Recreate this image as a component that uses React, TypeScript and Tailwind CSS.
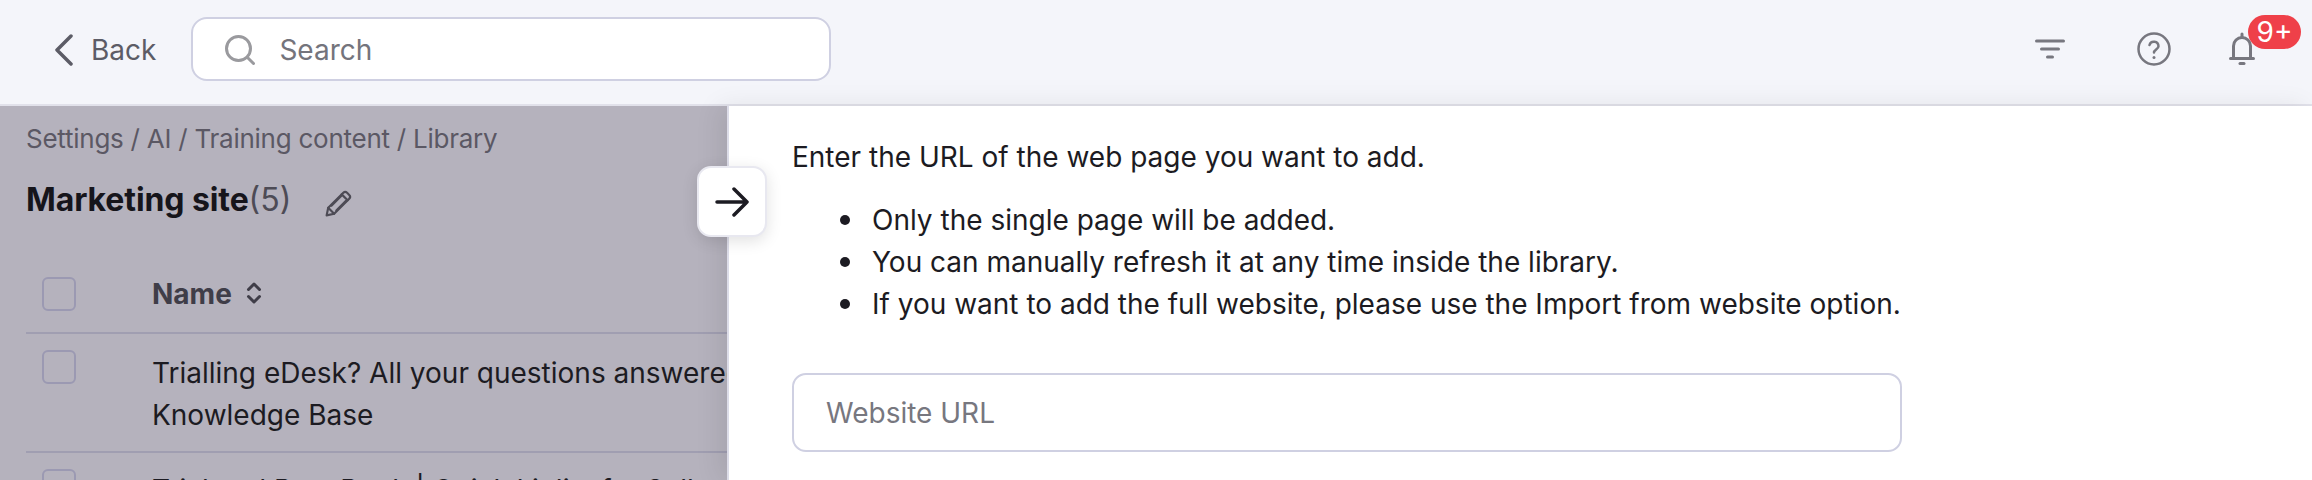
const bullets = [
    'Only the single page will be added.',
    'You can manually refresh it at any time inside the library.',
    'If you want to add the full website, please use the Import from website option.',
];

export default function App() {
    return (
        <div className="w-[2312px] h-[480px] overflow-hidden flex flex-col bg-white text-[28px] leading-[42px] text-[#1c1b22] font-['Inter',sans-serif]">
            {/* Top bar */}
            <header className="h-[106px] shrink-0 flex items-center pb-[7px] bg-[#f4f5fa] border-b-2 border-[#e1e1ea]">
                <button className="ml-[55px] mt-[3px] flex items-center gap-[18px] text-[#5c5c66]">
                    <svg className="w-[18px] h-[32px]" viewBox="0 0 18 32" fill="none" stroke="#5c5c66" strokeWidth="3.500" strokeLinecap="round" strokeLinejoin="round">
                        <path d="M16 2 2 16l14 14" />
                    </svg>
                    Back
                </button>
                <div className="ml-[35px] w-[640px] h-[64px] flex items-center rounded-[16px] border-2 border-[#cfd0e2] bg-white pl-[32px] pt-[3px] text-[#74747c]">
                    <svg className="w-[30px] h-[30px]" viewBox="0 0 30 30" fill="none" stroke="#9a9a9e" strokeWidth="3" strokeLinecap="round">
                        <circle cx="13.500" cy="13.500" r="12" />
                        <path d="m22.500 22.500 6 6" />
                    </svg>
                    <span className="ml-[24px]">Search</span>
                </div>
                <div className="ml-auto flex items-center mr-[57px]">
                    <svg className="w-[30px] h-[20px]" viewBox="0 0 30 20" fill="none" stroke="#77777f" strokeWidth="3" strokeLinecap="round">
                        <path d="M1.500 2h27M6.500 10h17M12.500 18h5" />
                    </svg>
                    <svg className="ml-[72px] w-[34px] h-[34px]" viewBox="0 0 34 34" fill="none" stroke="#77777f" strokeWidth="2.500" strokeLinecap="round" strokeLinejoin="round">
                        <circle cx="17" cy="17" r="15.500" />
                        <path d="M12.500 13a4.600 4.600 0 0 1 9 1.200c0 3-4.500 3.600-4.500 6.300" />
                        <path d="M17 25.500v.1" strokeWidth="3" />
                    </svg>
                    <div className="ml-[58px] relative w-[26px] h-[34px]">
                        <svg className="w-[26px] h-[34px]" viewBox="0 0 26 34" fill="none" stroke="#77777f" strokeWidth="3" strokeLinecap="round" strokeLinejoin="round">
                            <path d="M4.500 26V14a8.500 8.500 0 0 1 17 0v12" />
                            <path d="M1.500 26.500h23" />
                            <path d="M13 2v3" />
                            <path d="M11 31.500h4" />
                        </svg>
                        <span className="absolute left-[19px] top-[-17px] h-[34px] w-[53px] rounded-full bg-[#ef4049] text-white text-[28px] leading-[34px] text-center">9+</span>
                    </div>
                </div>
            </header>

            <div className="flex-1 flex min-h-0 relative">
                {/* Dimmed page behind the drawer */}
                <main className="w-[727px] shrink-0 overflow-hidden bg-[#b5b2bd] pl-[26px] pt-[12px]">
                    <div className="text-[26px] tracking-[-0.25px] text-[#5b5864] whitespace-nowrap">Settings / AI / Training content / Library</div>
                    <div className="mt-[19px] flex items-center h-[42px]">
                        <span className="text-[32px] font-bold tracking-[-0.1px] text-[#16151b]">Marketing site</span>
                        <span className="text-[32px] text-[#4d4b55]">(5)</span>
                        <svg className="ml-[34px] mt-[6px] w-[28px] h-[28px]" viewBox="0 0 26 26" fill="none" stroke="#4d4b55" strokeWidth="2" strokeLinejoin="round" strokeLinecap="round">
                            <path d="M1.500 24.500 3 17.500 17 3.500a2.500 2.500 0 0 1 3.500 0l2 2a2.500 2.500 0 0 1 0 3.500L8.500 23z" />
                            <path d="M6 15.500 15 6.500M10.500 20 19.500 11M3 17.500l5.500 5.500M15.500 5l5.500 5.500" />
                        </svg>
                    </div>
                    <div className="w-[900px] h-[113px] flex items-start border-b-2 border-[#a09eb1]">
                        <div className="ml-[16px] mt-[56px] w-[34px] h-[34px] rounded-[6px] border-2 border-[#9b99b2]" />
                        <div className="ml-[76px] mt-[52px] flex items-center font-bold text-[#3f3d48]">
                            Name
                            <svg className="ml-[14px] mt-[-2px] w-[16px] h-[22px]" viewBox="0 0 16 22" fill="none" stroke="#3f3d48" strokeWidth="3" strokeLinecap="round" strokeLinejoin="round">
                                <path d="M2.500 7.500 8 2l5.500 5.500M2.500 14.500 8 20l5.500-5.500" />
                            </svg>
                        </div>
                    </div>
                    <div className="w-[900px] h-[119px] flex items-start border-b-2 border-[#a09eb1]">
                        <div className="ml-[16px] mt-[16px] w-[34px] h-[34px] rounded-[6px] border-2 border-[#9b99b2]" />
                        <div className="ml-[76px] mt-[18px] whitespace-nowrap">
                            Trialling eDesk? All your questions answered |<br />Knowledge Base
                        </div>
                    </div>
                    <div className="w-[900px] flex items-start">
                        <div className="ml-[16px] mt-[16px] w-[34px] h-[34px] rounded-[6px] border-2 border-[#9b99b2]" />
                        <div className="ml-[76px] mt-[16px] whitespace-nowrap">Trial and Best Book | Quick kit list for Sellers</div>
                    </div>
                </main>

                {/* Drawer */}
                <section className="flex-1 bg-white border-l-2 border-[#dcdce8] pl-[63px] pt-[30px] shadow-[-8px_0_24px_rgba(0,0,0,0.08)]">
                    <p>Enter the URL of the web page you want to add.</p>
                    <ul className="mt-[21px] pl-[48px]">
                        {bullets.map((b) => (
                            <li key={b} className="flex items-center">
                                <span className="w-[10px] h-[10px] mr-[22px] shrink-0 rounded-full bg-[#1c1b22]" />
                                {b}
                            </li>
                        ))}
                    </ul>
                    <div className="mt-[48px] w-[1110px] h-[79px] flex items-center rounded-[14px] border-2 border-[#cfd0e2] pl-[32px] text-[#77777f]">
                        Website URL
                    </div>
                </section>

                {/* Collapse handle */}
                <button className="absolute left-[697px] top-[60px] w-[70px] h-[71px] flex items-center justify-center rounded-[14px] bg-white border-2 border-[#e8e8f0] shadow-[0_4px_16px_rgba(0,0,0,0.12)]">
                    <svg className="w-[34px] h-[30px]" viewBox="0 0 34 30" fill="none" stroke="#1c1b22" strokeWidth="3.500" strokeLinecap="round" strokeLinejoin="round">
                        <path d="M2 15h30M19 2l13 13-13 13" />
                    </svg>
                </button>
            </div>
        </div>
    );
}
